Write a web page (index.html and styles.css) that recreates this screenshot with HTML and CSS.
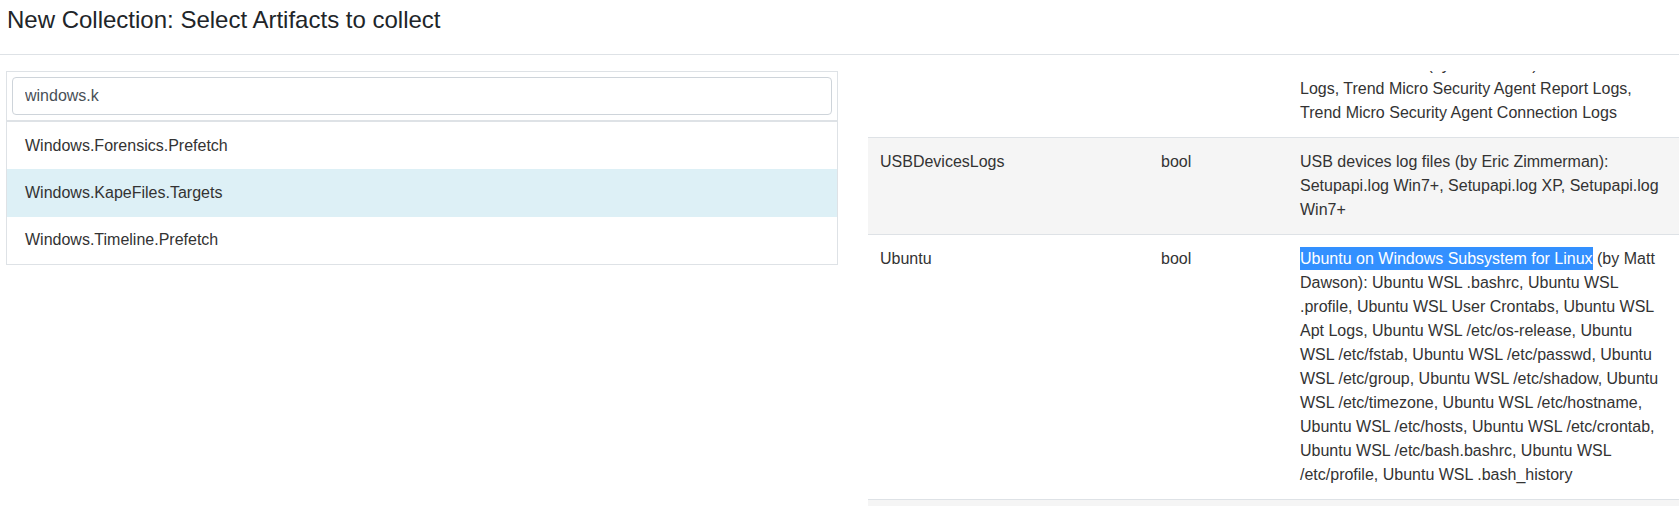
FILE: index.html
```html
<!DOCTYPE html>
<html lang="en">
<head>
<meta charset="utf-8">
<title>New Collection</title>
<link rel="stylesheet" href="styles.css">
</head>
<body>
<header class="page-header">
  <h4 class="page-title">New Collection: Select Artifacts to collect</h4>
</header>
<main class="workspace">
  <section class="picker">
    <div class="search">
      <input class="search-input" type="text" value="windows.k">
    </div>
    <ul class="results">
      <li class="result">Windows.Forensics.Prefetch</li>
      <li class="result result-active">Windows.KapeFiles.Targets</li>
      <li class="result">Windows.Timeline.Prefetch</li>
    </ul>
  </section>
  <section class="params">
    <table class="param-table">
      <colgroup>
        <col class="col-name">
        <col class="col-type">
        <col class="col-desc">
      </colgroup>
      <tbody>
        <tr>
          <td>TrendMicro</td>
          <td>bool</td>
          <td>Trend Micro Data (by Drew Ervin): Trend Micro Logs, Trend Micro Security Agent Report Logs, Trend Micro Security Agent Connection Logs</td>
        </tr>
        <tr class="striped">
          <td>USBDevicesLogs</td>
          <td>bool</td>
          <td>USB devices log files (by Eric Zimmerman): Setupapi.log Win7+, Setupapi.log XP, Setupapi.log Win7+</td>
        </tr>
        <tr>
          <td>Ubuntu</td>
          <td>bool</td>
          <td><span class="selected-text">Ubuntu on Windows Subsystem for Linux</span> (by Matt Dawson): Ubuntu WSL .bashrc, Ubuntu WSL .profile, Ubuntu WSL User Crontabs, Ubuntu WSL Apt Logs, Ubuntu WSL /etc/os-release, Ubuntu WSL /etc/fstab, Ubuntu WSL /etc/passwd, Ubuntu WSL /etc/group, Ubuntu WSL /etc/shadow, Ubuntu WSL /etc/timezone, Ubuntu WSL /etc/hostname, Ubuntu WSL /etc/hosts, Ubuntu WSL /etc/crontab, Ubuntu WSL /etc/bash.bashrc, Ubuntu WSL /etc/profile, Ubuntu WSL .bash_history</td>
        </tr>
        <tr class="striped">
          <td>VirtualBox</td>
          <td>bool</td>
          <td>VirtualBox Data (by Eric Zimmerman): VirtualBox Logs, VirtualBox Config</td>
        </tr>
      </tbody>
    </table>
  </section>
</main>
</body>
</html>
```
FILE: styles.css
```css
html, body {
  margin: 0;
  padding: 0;
  height: 100%;
  overflow: hidden;
  background: #fff;
}

body {
  font-family: "Liberation Sans", Arial, sans-serif;
  font-size: 16px;
  line-height: 24px;
  color: #212529;
}

.page-header {
  height: 54px;
  border-bottom: 1px solid #dee2e6;
  padding: 0 7px;
}

.page-title {
  margin: 0;
  font-size: 24px;
  font-weight: normal;
  line-height: 39px;
  color: #212529;
}

.workspace {
  display: flex;
  align-items: flex-start;
  gap: 30px;
  padding: 16px 0 0 6px;
  height: calc(100% - 55px);
  box-sizing: border-box;
  overflow: hidden;
}

.picker {
  flex: 0 0 832px;
  box-sizing: border-box;
  border: 1px solid #dee2e6;
}

.search {
  padding: 5px;
  border-bottom: 1px solid #dee2e6;
}

.search-input {
  display: block;
  width: 100%;
  height: 38px;
  box-sizing: border-box;
  margin: 0;
  padding: 6px 12px;
  border: 1px solid #ced4da;
  border-radius: 4px;
  font-family: "Liberation Sans", Arial, sans-serif;
  font-size: 16px;
  line-height: 24px;
  color: #495057;
  background: #fff;
  outline: none;
}

.results {
  list-style: none;
  margin: 0;
  padding: 0;
  border-top: 1px solid #dee2e6;
}

.result {
  display: flex;
  align-items: center;
  height: 47.33px;
  padding: 0 18px;
  color: #333;
}

.result-active {
  background: #ddf0f6;
}

.params {
  flex: 1 1 auto;
  align-self: stretch;
  overflow: hidden;
}

.param-table {
  width: 811px;
  margin-top: -31px;
  border-collapse: separate;
  border-spacing: 0;
  table-layout: fixed;
}

.col-name { width: 281px; }
.col-type { width: 139px; }
.col-desc { width: 391px; }

.param-table td {
  padding: 12px;
  border-top: 1px solid #dee2e6;
  vertical-align: top;
  line-height: 24px;
  color: #333;
}

.striped td {
  background: #f5f5f5;
}

.selected-text {
  background: #3390ff;
  color: #fff;
  padding: 3px 0;
}
```
